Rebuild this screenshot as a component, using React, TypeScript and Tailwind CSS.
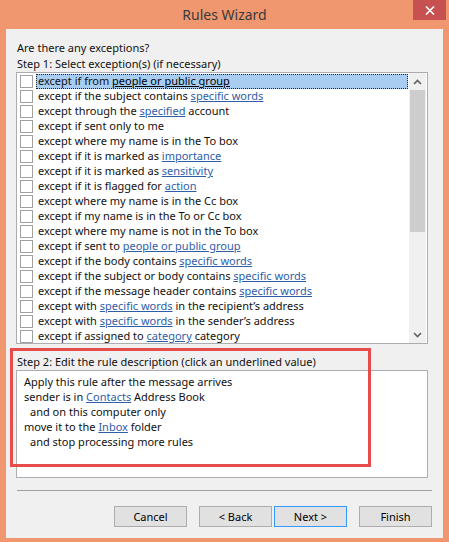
import React from 'react'

// ── Rule items ────────────────────────────────────────────────────────────────
// Each item is a list of parts; objects are the underlined (clickable) values
type Part = string | { link: string }

const exceptions: Part[][] = [
  ['except if from ', { link: 'people or public group' }],
  ['except if the subject contains ', { link: 'specific words' }],
  ['except through the ', { link: 'specified' }, ' account'],
  ['except if sent only to me'],
  ['except where my name is in the To box'],
  ['except if it is marked as ', { link: 'importance' }],
  ['except if it is marked as ', { link: 'sensitivity' }],
  ['except if it is flagged for ', { link: 'action' }],
  ['except where my name is in the Cc box'],
  ['except if my name is in the To or Cc box'],
  ['except where my name is not in the To box'],
  ['except if sent to ', { link: 'people or public group' }],
  ['except if the body contains ', { link: 'specific words' }],
  ['except if the subject or body contains ', { link: 'specific words' }],
  ['except if the message header contains ', { link: 'specific words' }],
  ['except with ', { link: 'specific words' }, ' in the recipient\u2019s address'],
  ['except with ', { link: 'specific words' }, ' in the sender\u2019s address'],
  ['except if assigned to ', { link: 'category' }, ' category'],
]

function Parts({ parts, selected }: { parts: Part[]; selected?: boolean }) {
  return (
    <span className="whitespace-pre">
      {parts.map((p, i) =>
        typeof p === 'string' ? (
          p
        ) : (
          <span
            key={i}
            className={selected ? 'underline text-black' : 'underline text-[#2f5da8]'}
          >
            {p.link}
          </span>
        ),
      )}
    </span>
  )
}

function Button({ label, focused = false }: { label: string; focused?: boolean }) {
  return (
    <button
      className={`h-[21px] w-[73px] border bg-[#e1e1e1] text-[11px] text-black leading-none ${
        focused ? 'border-[#3399ff]' : 'border-[#adadad]'
      }`}
    >
      {label}
    </button>
  )
}

export default function App() {
  return (
    <div
      className="flex h-[542px] w-[449px] flex-col bg-[#f0976f] text-[11px] text-[#111]"
      style={{ fontFamily: '"Noto Sans", "Open Sans", sans-serif' }}
    >
      {/* Title bar */}
      <div className="relative flex h-[29px] shrink-0 items-center justify-center">
        <span className="text-[14px] text-[#3a3a3a] pb-[1px]">Rules Wizard</span>
        <div className="absolute right-[3px] top-0 flex h-[20px] w-[33px] items-center justify-center bg-[#c75050]">
          <svg width="10" height="9" viewBox="0 0 10 9">
            <path d="M1 0.5 L9 8.5 M9 0.5 L1 8.5" stroke="#fff" strokeWidth="1.6" />
          </svg>
        </div>
      </div>

      {/* Client area */}
      <div className="mx-[6px] mb-[4px] flex flex-1 flex-col bg-[#f0f0f0] pl-[10px] pr-[15px]">
        <div className="mt-[11px] h-[15px] leading-[15px] pl-[1px]">Are there any exceptions?</div>
        <div className="mt-[1px] h-[15px] leading-[15px] pl-[1px]">Step 1: Select exception(s) (if necessary)</div>

        {/* Exception list */}
        <div className="mt-[1px] flex h-[272px] border border-[#abadb3] bg-white">
          <div className="flex-1 pt-[1px]">
            {exceptions.map((parts, i) => (
              <div key={i} className="flex h-[15px] items-center">
                <span className="ml-[3px] h-[13px] w-[13px] shrink-0 border border-[#a0a0a0] bg-white" />
                <div
                  className={`ml-[3px] flex h-[15px] flex-1 items-center pl-[2px] ${
                    i === 0 ? 'bg-[#a8cdf1] outline-1 outline-dotted outline-offset-[-1px] outline-[#222]' : ''
                  }`}
                >
                  <Parts parts={parts} selected={i === 0} />
                </div>
              </div>
            ))}
          </div>
          {/* Scrollbar */}
          <div className="ml-[1px] mr-[1px] flex w-[17px] flex-col bg-[#f0f0f0]">
            <div className="flex h-[17px] items-center justify-center">
              <svg width="9" height="6" viewBox="0 0 9 6">
                <path d="M1 5 L4.5 1.5 L8 5" stroke="#606060" strokeWidth="1.6" fill="none" />
              </svg>
            </div>
            <div className="mx-[1px] h-[142px] bg-[#cdcdcd]" />
            <div className="flex-1" />
            <div className="flex h-[17px] items-center justify-center">
              <svg width="9" height="6" viewBox="0 0 9 6">
                <path d="M1 1 L4.5 4.5 L8 1" stroke="#606060" strokeWidth="1.6" fill="none" />
              </svg>
            </div>
          </div>
        </div>

        {/* Step 2 */}
        <div className="relative">
          <div className="mt-[10px] h-[15px] leading-[15px] pl-[1px]">
            Step 2: Edit the rule description (click an underlined value)
          </div>
          <div className="mt-[1px] h-[108px] border border-[#abadb3] bg-white pl-[7px] pt-[3px]">
            <div className="h-[15px] leading-[15px]">Apply this rule after the message arrives</div>
            <div className="h-[15px] leading-[15px] whitespace-pre">
              sender is in <span className="underline text-[#2f5da8]">Contacts</span> Address Book
            </div>
            <div className="h-[15px] leading-[15px] pl-[6px]">and on this computer only</div>
            <div className="h-[15px] leading-[15px] whitespace-pre">
              move it to the <span className="underline text-[#2f5da8]">Inbox</span> folder
            </div>
            <div className="h-[15px] leading-[15px] pl-[6px]">and stop processing more rules</div>
          </div>
          {/* Red annotation box */}
          <div className="pointer-events-none absolute left-[-6px] top-[4px] h-[119px] w-[361px] border-[3px] border-[#e84b4b]" />
        </div>

        {/* Separator */}
        <div className="ml-[1px] mr-[-4px] mt-[12px] h-[1px] bg-[#a0a0a0]" />

        {/* Buttons */}
        <div className="mr-[-4px] mt-[15px] flex justify-end">
          <Button label="Cancel" />
          <div className="w-[12px]" />
          <Button label="< Back" />
          <div className="w-[2px]" />
          <Button label="Next >" focused />
          <div className="w-[12px]" />
          <Button label="Finish" />
        </div>
      </div>
    </div>
  )
}
